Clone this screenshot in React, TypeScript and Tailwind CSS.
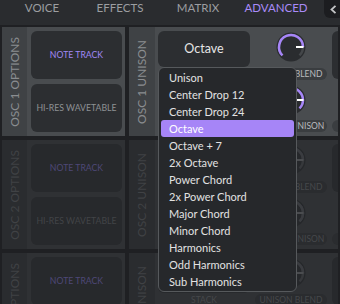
import React from 'react';

const font = { fontFamily: 'Lato, "Open Sans", sans-serif' };

const tabs = ['VOICE', 'EFFECTS', 'MATRIX', 'ADVANCED'];

const stackItems = [
  'Unison',
  'Center Drop 12',
  'Center Drop 24',
  'Octave',
  'Octave + 7',
  '2x Octave',
  'Power Chord',
  '2x Power Chord',
  'Major Chord',
  'Minor Chord',
  'Harmonics',
  'Odd Harmonics',
  'Sub Harmonics',
];

type Theme = {
  strip: string;
  body: string;
  button: string;
  label: string;
  noteTrack: string;
  hiRes: string;
  pill: string;
  pillText: string;
  knobFill: string;
  track: string;
  arc: string;
  needle: string;
  boxText: string;
};

const bright: Theme = {
  strip: 'bg-[#3f4245]',
  body: 'bg-[#494c4f]',
  button: 'bg-[#2c2e31]',
  label: 'text-[#8a8d90]',
  noteTrack: 'text-[#a088f5]',
  hiRes: 'text-[#8e9194]',
  pill: 'bg-[#3a3d40]',
  pillText: 'text-[#b9bbbd]',
  knobFill: '#2a2c2f',
  track: '#44474a',
  arc: '#a685f7',
  needle: '#ffffff',
  boxText: 'text-[#e6e6e6]',
};

const dim: Theme = {
  strip: 'bg-[#2a2c2f]',
  body: 'bg-[#2f3134]',
  button: 'bg-[#27292c]',
  label: 'text-[#404245]',
  noteTrack: 'text-[#4e4877]',
  hiRes: 'text-[#424447]',
  pill: 'bg-[#2a2c2f]',
  pillText: 'text-[#46484b]',
  knobFill: '#26282b',
  track: '#36383b',
  arc: '#3a3c40',
  needle: '#4a4c4f',
  boxText: 'text-[#55575a]',
};

function Knob({ t, full }: { t: Theme; full?: boolean }) {
  return (
    <svg width="30" height="30" viewBox="0 0 30 30">
      <circle cx="15" cy="15" r="14.5" fill={t.knobFill} />
      <path d="M6.515 23.485 A12 12 0 1 1 23.485 23.485" fill="none" stroke={t.track} strokeWidth="2.5" />
      <path
        d={full ? 'M6.515 23.485 A12 12 0 1 1 23.485 23.485' : 'M6.515 23.485 A12 12 0 1 1 27 15'}
        fill="none"
        stroke={t.arc}
        strokeWidth="2.5"
      />
      <line x1="20" y1="15" x2="27.5" y2="15" stroke={t.needle} strokeWidth="2" />
    </svg>
  );
}

function Pill({ t, text }: { t: Theme; text: string }) {
  return (
    <div
      className={`h-[12px] rounded-full ${t.pill} ${t.pillText} text-[8.5px] leading-[12px] text-center w-full whitespace-nowrap overflow-hidden`}
    >
      {text}
    </div>
  );
}

function Row({ n, t }: { n: number; t: Theme }) {
  return (
    <div className="flex gap-[4px] h-[109px] shrink-0">
      <div className="flex w-[123px] shrink-0">
        <div className={`w-[25px] ${t.strip} flex items-center justify-center`}>
          <span className={`[writing-mode:vertical-rl] rotate-180 text-[12px] leading-none whitespace-nowrap ${t.label}`}>
            OSC {n} OPTIONS
          </span>
        </div>
        <div className={`flex-1 ${t.body} pl-[4px] pr-[3px] py-[4px] flex flex-col gap-[5px]`}>
          <div className={`flex-1 rounded-[6px] ${t.button} flex items-center justify-center text-[8.7px] ${t.noteTrack}`}>
            NOTE TRACK
          </div>
          <div className={`flex-1 rounded-[6px] ${t.button} flex items-center justify-center text-[8.7px] whitespace-nowrap ${t.hiRes}`}>
            HI-RES WAVETABLE
          </div>
        </div>
      </div>
      <div className="flex flex-1 min-w-0">
        <div className={`w-[26px] shrink-0 ${t.strip} flex items-center justify-center`}>
          <span className={`[writing-mode:vertical-rl] rotate-180 text-[12px] leading-none whitespace-nowrap ${t.label}`}>
            OSC {n} UNISON
          </span>
        </div>
        <div className={`flex-1 ${t.body} pl-[3px] pt-[4px] flex gap-[5px] overflow-hidden`}>
          <div className="w-[92px] shrink-0 flex flex-col">
            <div className={`h-[36px] rounded-[6px] ${t.button} flex items-center justify-center text-[12.5px] ${t.boxText}`}>
              Octave
            </div>
            <div className={`mt-[1px] h-[12px] text-[8.5px] leading-[12px] text-center ${t.pillText}`}>STACK</div>
          </div>
          <div className="w-[72px] shrink-0 flex flex-col items-center">
            <div className="mt-[1px] h-[30px]">
              <Knob t={t} />
            </div>
            <div className="mt-[6px] w-full">
              <Pill t={t} text="UNISON BLEND" />
            </div>
            <div className="mt-[5px] h-[30px]">
              <Knob t={t} full />
            </div>
            <div className="mt-[5px] w-full">
              <Pill t={t} text="STEREO UNISON" />
            </div>
          </div>
          <div className="w-[40px] shrink-0 flex flex-col">
            <div className={`h-[48px] rounded-[6px] ${t.button}`} />
            <div className={`mt-[41px] h-[12px] rounded-full ${t.pill}`} />
          </div>
        </div>
      </div>
    </div>
  );
}

export default function App() {
  return (
    <div className="w-[340px] h-[304px] overflow-hidden bg-[#1f2023] relative" style={font}>
      <div className="h-[25px] bg-[#2a2c2f] flex items-start">
        <div className="flex pl-[3px] pt-[1px]">
          {tabs.map((tab) => (
            <div
              key={tab}
              className={`w-[78px] text-center text-[11.5px] leading-[14px] ${
                tab === 'ADVANCED' ? 'text-[#a98bf8]' : 'text-[#9c9ea1]'
              }`}
            >
              {tab}
            </div>
          ))}
        </div>
        <div className="ml-[9px] w-[20px] h-[18px] rounded-bl-[6px] bg-[#1c1d20] flex items-center pl-[6px]">
          <svg width="7" height="9" viewBox="0 0 7 9">
            <polyline points="5.5,0.8 1.5,4.5 5.5,8.2" fill="none" stroke="#c4c5c7" strokeWidth="1.8" />
          </svg>
        </div>
      </div>
      <div className="pt-[2px] px-[2px] flex flex-col gap-[4px]">
        <Row n={1} t={bright} />
        <Row n={2} t={dim} />
        <Row n={3} t={dim} />
      </div>

      <div className="absolute left-[158px] top-[67px] w-[139px] h-[225px] rounded-[6px] border border-[#56595c] bg-[#26282b] p-[1px] flex flex-col">
        {stackItems.map((item) => (
          <div
            key={item}
            className={`h-[17px] shrink-0 pl-[8px] mx-[1px] rounded-[3px] text-[11px] leading-[17px] ${
              item === 'Octave' ? 'bg-[#a685f7] text-white' : 'text-[#e2e2e2]'
            }`}
          >
            {item}
          </div>
        ))}
      </div>
    </div>
  );
}
